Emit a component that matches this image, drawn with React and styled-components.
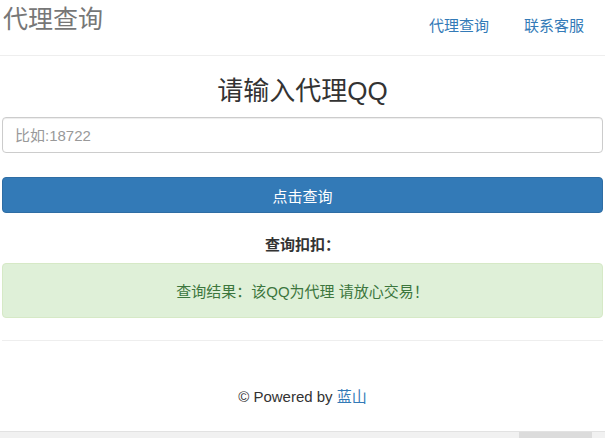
import React from 'react';
import styled, { createGlobalStyle } from 'styled-components';

const GlobalStyle = createGlobalStyle`
  html, body {
    margin: 0;
    padding: 0;
    background: #ffffff;
    font-family: "Liberation Sans", "Noto Sans CJK SC", sans-serif;
    color: #333333;
  }
`;

const Page = styled.div`
  width: 605px;
  height: 438px;
  display: flex;
  flex-direction: column;
  overflow: hidden;
`;

const Header = styled.div`
  height: 55px;
  display: flex;
  justify-content: space-between;
  align-items: flex-start;
  border-bottom: 1px solid #eeeeee;
  padding: 0 21px 0 3px;
`;

const Brand = styled.div`
  font-size: 25px;
  color: #777777;
  line-height: 36px;
  padding-top: 1px;
`;

const Nav = styled.div`
  display: flex;
  gap: 35px;
  padding-top: 16px;
`;

const NavLink = styled.a`
  font-size: 15px;
  color: #337ab7;
  text-decoration: none;
  line-height: 20px;
`;

const Main = styled.div`
  padding: 0 2px;
  display: flex;
  flex-direction: column;
`;

const Title = styled.h2`
  margin: 18px 0 0;
  text-align: center;
  font-weight: 400;
  font-size: 26px;
  line-height: 34px;
  color: #333333;
`;

const Input = styled.input`
  margin-top: 9px;
  height: 36px;
  box-sizing: border-box;
  border: 1px solid #cccccc;
  border-radius: 4px;
  padding: 0 12px;
  font-size: 15px;
  font-family: inherit;
  box-shadow: inset 0 1px 1px rgba(0, 0, 0, 0.075);
  &::placeholder {
    color: #999999;
  }
`;

const Button = styled.button`
  margin-top: 24px;
  height: 36px;
  border: 1px solid #2e6da4;
  border-radius: 4px;
  background: #337ab7;
  color: #ffffff;
  font-size: 15px;
  font-family: inherit;
`;

const Label = styled.div`
  margin-top: 21px;
  text-align: center;
  font-weight: 700;
  font-size: 15px;
  line-height: 22px;
`;

const Alert = styled.div`
  margin-top: 7px;
  height: 55px;
  box-sizing: border-box;
  display: flex;
  align-items: center;
  justify-content: center;
  background: #dff0d8;
  border: 1px solid #d6e9c6;
  border-radius: 4px;
  color: #3c763d;
  font-size: 15px;
`;

const Rule = styled.div`
  margin-top: 22px;
  border-top: 1px solid #eeeeee;
`;

const Footer = styled.div`
  margin-top: 46px;
  text-align: center;
  font-size: 15px;
  color: #333333;
  line-height: 20px;
`;

const FooterLink = styled.a`
  color: #337ab7;
  text-decoration: none;
`;

const Scrollbar = styled.div`
  margin-top: auto;
  height: 6px;
  border-top: 1px solid #e2e2e2;
  background: #f1f1f1;
  display: flex;
  justify-content: flex-end;
  padding-right: 13px;
`;

const Thumb = styled.div`
  width: 73px;
  background: #dcdcdc;
`;

export default function App() {
  return (
    <Page>
      <GlobalStyle />
      <Header>
        <Brand>代理查询</Brand>
        <Nav>
          <NavLink href="#">代理查询</NavLink>
          <NavLink href="#">联系客服</NavLink>
        </Nav>
      </Header>
      <Main>
        <Title>请输入代理QQ</Title>
        <Input placeholder="比如:18722" />
        <Button>点击查询</Button>
        <Label>查询扣扣：</Label>
        <Alert>查询结果：该QQ为代理 请放心交易！</Alert>
        <Rule />
        <Footer>
          © Powered by <FooterLink href="#">蓝山</FooterLink>
        </Footer>
      </Main>
      <Scrollbar>
        <Thumb />
      </Scrollbar>
    </Page>
  );
}
